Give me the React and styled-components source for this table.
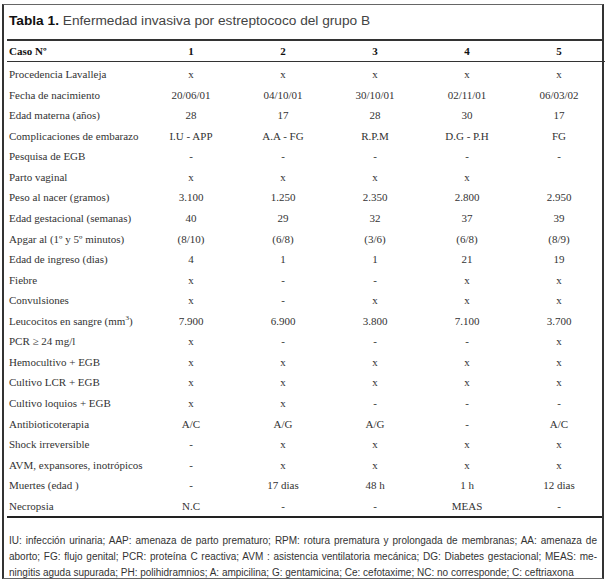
import React from 'react';
import styled, { createGlobalStyle } from 'styled-components';

const GlobalStyle = createGlobalStyle`
    html, body {
        margin: 0;
        padding: 0;
        background: #fff;
    }
`;

const Frame = styled.div`
    box-sizing: border-box;
    margin: 4px 0 0 2px;
    width: 602px;
    height: 575px;
    border: 1px solid #666;
    border-left: 2px solid #333;
    border-right: 2px solid #333;
    display: flex;
    flex-direction: column;
`;

const Caption = styled.div`
    padding: 8px 0 0 5px;
    height: 28px;
    box-sizing: border-box;
    font-family: "Liberation Sans", Arial, sans-serif;
    font-size: 13.7px;
    color: #444;
    strong {
        color: #111;
    }
`;

const Grid = styled.div`
    margin: 6px 0 0 3px;
    display: grid;
    grid-template-columns: 138px repeat(5, 92px);
    border-top: 2px solid #333;
    border-bottom: 2px solid #222;
    font-family: "Liberation Serif", "Times New Roman", serif;
    font-size: 11px;
    color: #333;
`;

const HeadCell = styled.div`
    height: 20px;
    line-height: 20px;
    font-weight: bold;
    color: #111;
    border-bottom: 1px solid #333;
    text-align: ${p => (p.$label ? 'left' : 'center')};
    padding-left: ${p => (p.$label ? '2px' : '0')};
    margin-bottom: 2px;
`;

const Cell = styled.div`
    height: 20.57px;
    line-height: 20.57px;
    white-space: nowrap;
    text-align: ${p => (p.$label ? 'left' : 'center')};
    padding-left: ${p => (p.$label ? '2px' : '0')};
`;

const Sup = styled.sup`
    font-size: 7px;
    line-height: 0;
`;

const Notes = styled.div`
    margin: auto 0 -3px 0;
    padding: 0 5px;
    font-family: "Liberation Sans", Arial, sans-serif;
    font-size: 10px;
    line-height: 16px;
    color: #333;
`;

const NoteLine = styled.div`
    text-align: ${p => (p.$last ? 'left' : 'justify')};
    text-align-last: ${p => (p.$last ? 'left' : 'justify')};
    white-space: nowrap;
`;

const rows = [
    ['Procedencia Lavalleja', 'x', 'x', 'x', 'x', 'x'],
    ['Fecha de nacimiento', '20/06/01', '04/10/01', '30/10/01', '02/11/01', '06/03/02'],
    ['Edad materna (años)', '28', '17', '28', '30', '17'],
    ['Complicaciones de embarazo', 'I.U - APP', 'A.A - FG', 'R.P.M', 'D.G - P.H', 'FG'],
    ['Pesquisa de EGB', '-', '-', '-', '-', '-'],
    ['Parto vaginal', 'x', 'x', 'x', 'x', ''],
    ['Peso al nacer (gramos)', '3.100', '1.250', '2.350', '2.800', '2.950'],
    ['Edad gestacional (semanas)', '40', '29', '32', '37', '39'],
    ['Apgar al (1º y 5º minutos)', '(8/10)', '(6/8)', '(3/6)', '(6/8)', '(8/9)'],
    ['Edad de ingreso (dias)', '4', '1', '1', '21', '19'],
    ['Fiebre', 'x', '-', '-', 'x', 'x'],
    ['Convulsiones', 'x', '-', 'x', 'x', 'x'],
    [<>Leucocitos en sangre (mm<Sup>3</Sup>)</>, '7.900', '6.900', '3.800', '7.100', '3.700'],
    ['PCR ≥ 24 mg/l', 'x', '-', '-', '-', 'x'],
    ['Hemocultivo + EGB', 'x', 'x', 'x', 'x', 'x'],
    ['Cultivo LCR + EGB', 'x', 'x', 'x', 'x', 'x'],
    ['Cultivo loquios + EGB', 'x', 'x', '-', '-', '-'],
    ['Antibioticoterapia', 'A/C', 'A/G', 'A/G', '-', 'A/C'],
    ['Shock irreversible', '-', 'x', 'x', 'x', 'x'],
    ['AVM, expansores, inotrópicos', '-', 'x', 'x', 'x', 'x'],
    ['Muertes (edad )', '-', '17 dias', '48 h', '1 h', '12 dias'],
    ['Necropsia', 'N.C', '-', '-', 'MEAS', '-'],
];

export default function App() {
    return (
        <>
            <GlobalStyle />
            <Frame>
                <Caption>
                    <strong>Tabla 1.</strong> Enfermedad invasiva por estreptococo del grupo B
                </Caption>
                <Grid>
                    <HeadCell $label>Caso Nº</HeadCell>
                    {[1, 2, 3, 4, 5].map(n => <HeadCell key={n}>{n}</HeadCell>)}
                    {rows.map((row, i) =>
                        row.map((value, j) => (
                            <Cell key={`${i}-${j}`} $label={j === 0}>{value}</Cell>
                        ))
                    )}
                </Grid>
                <Notes>
                    <NoteLine>IU: infección urinaria; AAP: amenaza de parto prematuro; RPM: rotura prematura y prolongada de membranas; AA: amenaza de</NoteLine>
                    <NoteLine>aborto; FG: flujo genital; PCR: proteína C reactiva; AVM : asistencia ventilatoria mecánica; DG: Diabetes gestacional; MEAS: me-</NoteLine>
                    <NoteLine $last>ningitis aguda supurada; PH: polihidramnios; A: ampicilina; G: gentamicina; Ce: cefotaxime; NC: no corresponde; C: ceftriaxona</NoteLine>
                </Notes>
            </Frame>
        </>
    );
}
